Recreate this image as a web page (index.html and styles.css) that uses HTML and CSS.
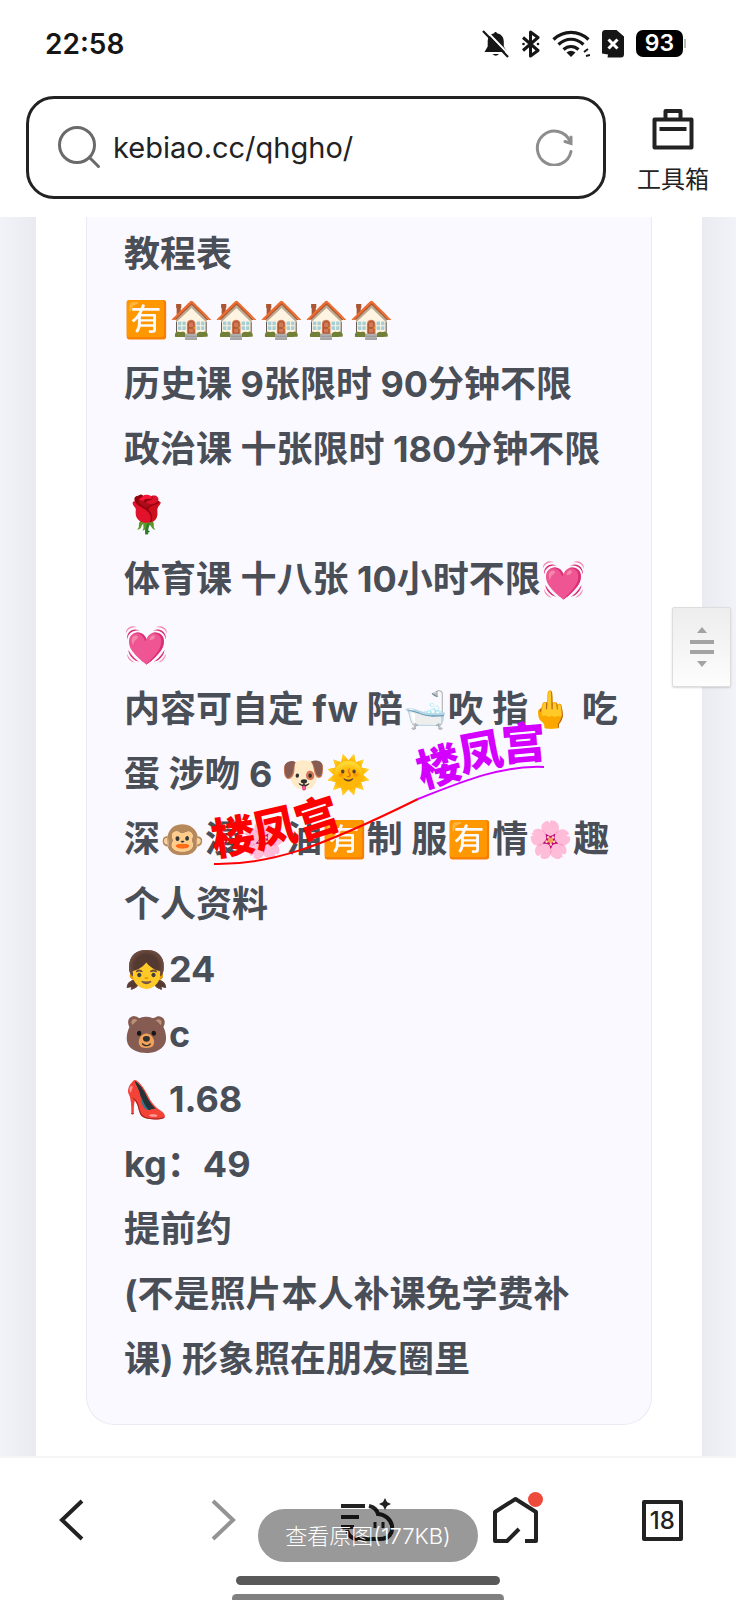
FILE: index.html
```html
<!DOCTYPE html>
<html lang="zh-CN">
<head>
    <meta charset="UTF-8">
    <meta name="viewport" content="width=device-width, initial-scale=1.0">
    <title>kebiao.cc/qhgho/</title>
    <link rel="stylesheet" href="styles.css">
</head>
<body>
    <header>
        <div class="status-bar">
            <span class="time">22:58</span>
            <div class="status-icons">
                <svg width="28" height="28" viewBox="0 0 28 28">
                    <path d="M13.500 2c.8 0 1.300.6 1.500 1.300 4.500.9 6.800 4 6.800 8.500v4.700l3.500 5.500H2.500l3.200-5.500v-4.700c0-4.500 2.300-7.600 6.500-8.500.1-.7.600-1.300 1.300-1.300z" fill="#161616"/>
                    <path d="M10.500 24h6.500q-3.200 3.500-6.500 0z" fill="#161616"/>
                    <path d="M3 -.5L28 25.500" stroke="#fff" stroke-width="2"/>
                    <path d="M1 1L26 27" stroke="#161616" stroke-width="2.200"/>
                </svg>
                <svg width="20" height="28" viewBox="0 0 20 28">
                    <path d="M2 7.500l15 13L9.500 26V2L17 7.500 2 20.500" fill="none" stroke="#161616" stroke-width="3" stroke-linejoin="round"/>
                    <circle cx="2.500" cy="14" r="1.300" fill="#161616"/>
                    <circle cx="17" cy="14" r="1.300" fill="#161616"/>
                </svg>
                <svg width="38" height="28" viewBox="0 0 38 28">
                    <g fill="none" stroke="#161616" stroke-width="3.200">
                        <path d="M1.500 9.500c10-9.500 25-9.500 35 0"/>
                        <path d="M6.500 14.500c7.500-7 17.500-7 25 0"/>
                        <path d="M11.500 19.500c4.500-4 10.500-4 15 0"/>
                    </g>
                    <path d="M14.500 22.500q4.500-3.500 9 0L19 27z" fill="#161616"/>
                    <path d="M32 22l4-3M34 26l4-1" stroke="#161616" stroke-width="2"/>
                </svg>
                <svg width="24" height="28" viewBox="0 0 24 28">
                    <path d="M4 0h11.500L23 6.500V24q0 3.500-3 3.500H6.500l.5-3-6-1V3.500Q1 0 4 0z" fill="#161616"/>
                    <path d="M7.500 9.500l9 9m0-9l-9 9" stroke="#fff" stroke-width="3"/>
                </svg>
                <span class="battery">93</span>
            </div>
        </div>
        <div class="toolbar">
            <form class="address">
                <svg width="44" height="44" viewBox="0 0 44 44" fill="none" stroke="#6a6a6a" stroke-width="3">
                    <circle cx="20" cy="20" r="17.500"/>
                    <path d="M32.500 32.500l9 9" stroke-linecap="round"/>
                </svg>
                <input type="text" aria-label="网址" value="kebiao.cc/qhgho/">
                <button type="button" aria-label="刷新">
                    <svg width="38" height="38" viewBox="0 0 38 38" fill="none" stroke="#8d8d8d" stroke-width="3" stroke-linecap="round">
                        <path d="M36 23.500A17 17 0 1 1 35 13.500"/>
                        <path d="M36 9v6.500l-6-2"/>
                    </svg>
                </button>
            </form>
            <button class="toolbox" type="button">
                <svg width="42" height="42" viewBox="0 0 42 42" fill="none" stroke="#222" stroke-width="4" stroke-linejoin="round">
                    <rect x="2.500" y="11.500" width="37" height="28"/>
                    <path d="M13.500 11V3h15v8M7.500 21h27"/>
                </svg>
                <span>工具箱</span>
            </button>
        </div>
    </header>

    <main>
        <div class="page">
            <article class="card">
                <p>教程表</p>
                <p><span class="emoji">🈶</span>🏠🏠🏠🏠🏠</p>
                <p>历史课 9张限时 90分钟不限</p>
                <p>政治课 十张限时 180分钟不限🌹</p>
                <p>体育课 十八张 10小时不限💓<br>💓</p>
                <p>内容可自定 fw 陪🛁吹 指🖕 吃蛋 涉吻 6 🐶🌞</p>
                <p>深🐵漫🌸油<span class="emoji">🈶</span>制 服<span class="emoji">🈶</span>情🌸趣</p>
                <p>个人资料</p>
                <p>👧24</p>
                <p>🐻c</p>
                <p>👠1.68</p>
                <p>kg：49</p>
                <p>提前约</p>
                <p>(不是照片本人补课免学费补<br>课) 形象照在朋友圈里</p>
                <!-- stamp lying over the text -->
                <svg class="stamp" width="336" height="150" viewBox="0 0 336 150">
                    <path d="M3 145C60 146 110 128 207 80" fill="none" stroke="#f00" stroke-width="2"/>
                    <path d="M207 80C250 63 290 46 333 48" fill="none" stroke="#d400ff" stroke-width="2"/>
                    <g fill="#f00">
                        <text transform="translate(3 137) rotate(-9)">楼</text>
                        <text transform="translate(46 130) rotate(-13)">凤</text>
                        <text transform="translate(90 121) rotate(-18)">宫</text>
                    </g>
                    <g fill="#d400ff">
                        <text transform="translate(211 69) rotate(-16)">楼</text>
                        <text transform="translate(251 53) rotate(-11)">凤</text>
                        <text transform="translate(292 42) rotate(-5)">宫</text>
                    </g>
                </svg>
            </article>
        </div>
        <button class="scroll-handle" type="button" aria-label="滚动">
            <svg width="26" height="40" viewBox="0 0 26 40" fill="#a3a3a3">
                <path d="M13 0l5 6H8zM13 40l5-6H8zM1 13h24v4H1zM1 23h24v4H1z"/>
            </svg>
        </button>
    </main>

    <footer>
        <nav>
            <button type="button" aria-label="后退">
                <svg width="44" height="48" viewBox="0 0 44 48" fill="none" stroke="#222" stroke-width="4"><path d="M30 5L10 24l20 19"/></svg>
            </button>
            <button type="button" aria-label="前进">
                <svg width="44" height="48" viewBox="0 0 44 48" fill="none" stroke="#949494" stroke-width="4"><path d="M14 5l20 19-20 19"/></svg>
            </button>
            <button type="button" aria-label="助手">
                <svg width="56" height="48" viewBox="0 0 56 48" fill="none" stroke="#222" stroke-width="4">
                    <path d="M1 10h24M1 21h18M1 31h13"/>
                    <path d="M7 34q2 9 11 9h22c9 0 13-6 12-13s-8-12-14-12c-1-4-4-7-9-8"/>
                    <path d="M35 26v6M43 26v6" stroke-width="3"/>
                    <path d="M45 2l2 4 4 2-4 2-2 4-2-4-4-2 4-2z" fill="#222" stroke="none"/>
                </svg>
            </button>
            <button class="home" type="button" aria-label="主页">
                <svg width="48" height="50" viewBox="0 0 48 50" fill="none" stroke="#222" stroke-width="4" stroke-linejoin="round">
                    <path d="M34 46h11V17L24.500 4 4 17v29h12l12-12"/>
                </svg>
                <i class="dot"></i>
            </button>
            <button type="button" aria-label="标签页"><span class="tabs">18</span></button>
        </nav>
        <div class="indicator"></div>
        <div class="indicator second"></div>
        <button class="original" type="button">查看原图(177KB)</button>
    </footer>
</body>
</html>
```
FILE: styles.css
```css
* {
    box-sizing: border-box;
}

body {
    margin: 0;
    min-height: 100vh;
    display: flex;
    flex-direction: column;
    background-color: #fff;
    color: #222;
    font-family: Inter, "Noto Sans CJK SC", sans-serif;
}

button {
    padding: 0;
    border: none;
    background: none;
    color: inherit;
    font-family: inherit;
}

svg {
    display: block;
    flex: none;
}

/* top */
.status-bar {
    display: flex;
    align-items: center;
    justify-content: space-between;
    height: 87px;
    padding: 0 53px 0 45px;
}

.time {
    font-size: 28px;
    font-weight: 600;
    color: #161616;
}

.status-icons {
    display: flex;
    align-items: center;
    gap: 11px;
}

.battery {
    position: relative;
    width: 47px;
    border-radius: 7px;
    background-color: #000;
    color: #fff;
    font-size: 23px;
    line-height: 27px;
    font-weight: 600;
    text-align: center;
}

.battery::after {
    content: "";
    position: absolute;
    left: 48px;
    top: 9px;
    width: 2px;
    height: 9px;
    background-color: #bbb;
}

.toolbar {
    display: flex;
    align-items: center;
    gap: 31px;
    height: 130px;
    padding: 0 27px 10px 26px;
}

.address {
    flex: 1;
    display: flex;
    align-items: center;
    gap: 12px;
    height: 103px;
    min-width: 0;
    padding: 0 30px 0 28px;
    border: 3px solid #222;
    border-radius: 28px;
}

.address input {
    flex: 1;
    min-width: 0;
    padding: 0;
    border: none;
    outline: none;
    background: none;
    color: #222;
    font-family: inherit;
    font-size: 29px;
}

.toolbox {
    display: flex;
    flex-direction: column;
    align-items: center;
    gap: 12px;
    padding-top: 12px;
    font-size: 24px;
    line-height: 36px;
}

/* web page */
main {
    position: relative;
    flex: 1;
    padding: 0 34px 0 36px;
    overflow: hidden;
    background: linear-gradient(to right, #f1f3f8, #e9ebf0 36px, #e9ebf0 calc(100% - 34px), #f1f3f8);
}

.page {
    height: 100%;
    padding: 0 50px 31px;
    background-color: #fff;
}

.card {
    position: relative;
    padding: 5px 28px 32px 37px;
    border: 1px solid #ebeaf3;
    border-top: none;
    border-radius: 0 0 28px 28px;
    background-color: #faf9ff;
    color: #494e57;
    font-size: 36px;
    font-weight: 700;
    line-height: 65px;
}

.card p {
    margin: 0;
}

.emoji {
    font-family: "Noto Color Emoji", sans-serif;
    line-height: 1;
}

.stamp {
    position: absolute;
    left: 124px;
    top: 502px;
    overflow: visible;
    font-family: "Noto Sans CJK SC", sans-serif;
    font-size: 44px;
    font-weight: 900;
}

.scroll-handle {
    position: absolute;
    right: 5px;
    top: 390px;
    display: flex;
    align-items: center;
    justify-content: center;
    width: 59px;
    height: 80px;
    border: 1px solid #ddd;
    border-radius: 2px;
    background: linear-gradient(#ededee, #fdfdfd);
    box-shadow: 0 1px 2px rgba(0,0,0,0.15);
}

/* bottom */
footer {
    position: relative;
    height: 144px;
    border-top: 2px solid #f5f5f5;
    overflow: hidden;
}

nav {
    display: grid;
    grid-template-columns: repeat(5, 1fr);
    height: 118px;
    padding-top: 6px;
}

nav button {
    display: flex;
    align-items: center;
    justify-content: center;
}

.home {
    position: relative;
}

.dot {
    position: absolute;
    left: calc(50% + 13px);
    top: 28px;
    width: 15px;
    height: 15px;
    border-radius: 50%;
    background-color: #ed4a3b;
}

.tabs {
    width: 41px;
    height: 41px;
    border: 4px solid #222;
    border-radius: 2px;
    font-size: 24px;
    line-height: 33px;
    font-weight: 500;
}

.indicator {
    width: 36%;
    height: 9px;
    margin: 0 auto;
    border-radius: 5px;
    background-color: #595959;
}

.indicator.second {
    width: 37%;
    margin-top: 9px;
    background-color: #808080;
}

.original {
    position: absolute;
    left: 50%;
    top: 51px;
    width: 220px;
    height: 53px;
    padding-bottom: 3px;
    transform: translateX(-50%);
    border-radius: 27px;
    background-color: rgba(0,0,0,0.4);
    color: #fff;
    font-size: 22px;
    font-weight: 300;
}
```
